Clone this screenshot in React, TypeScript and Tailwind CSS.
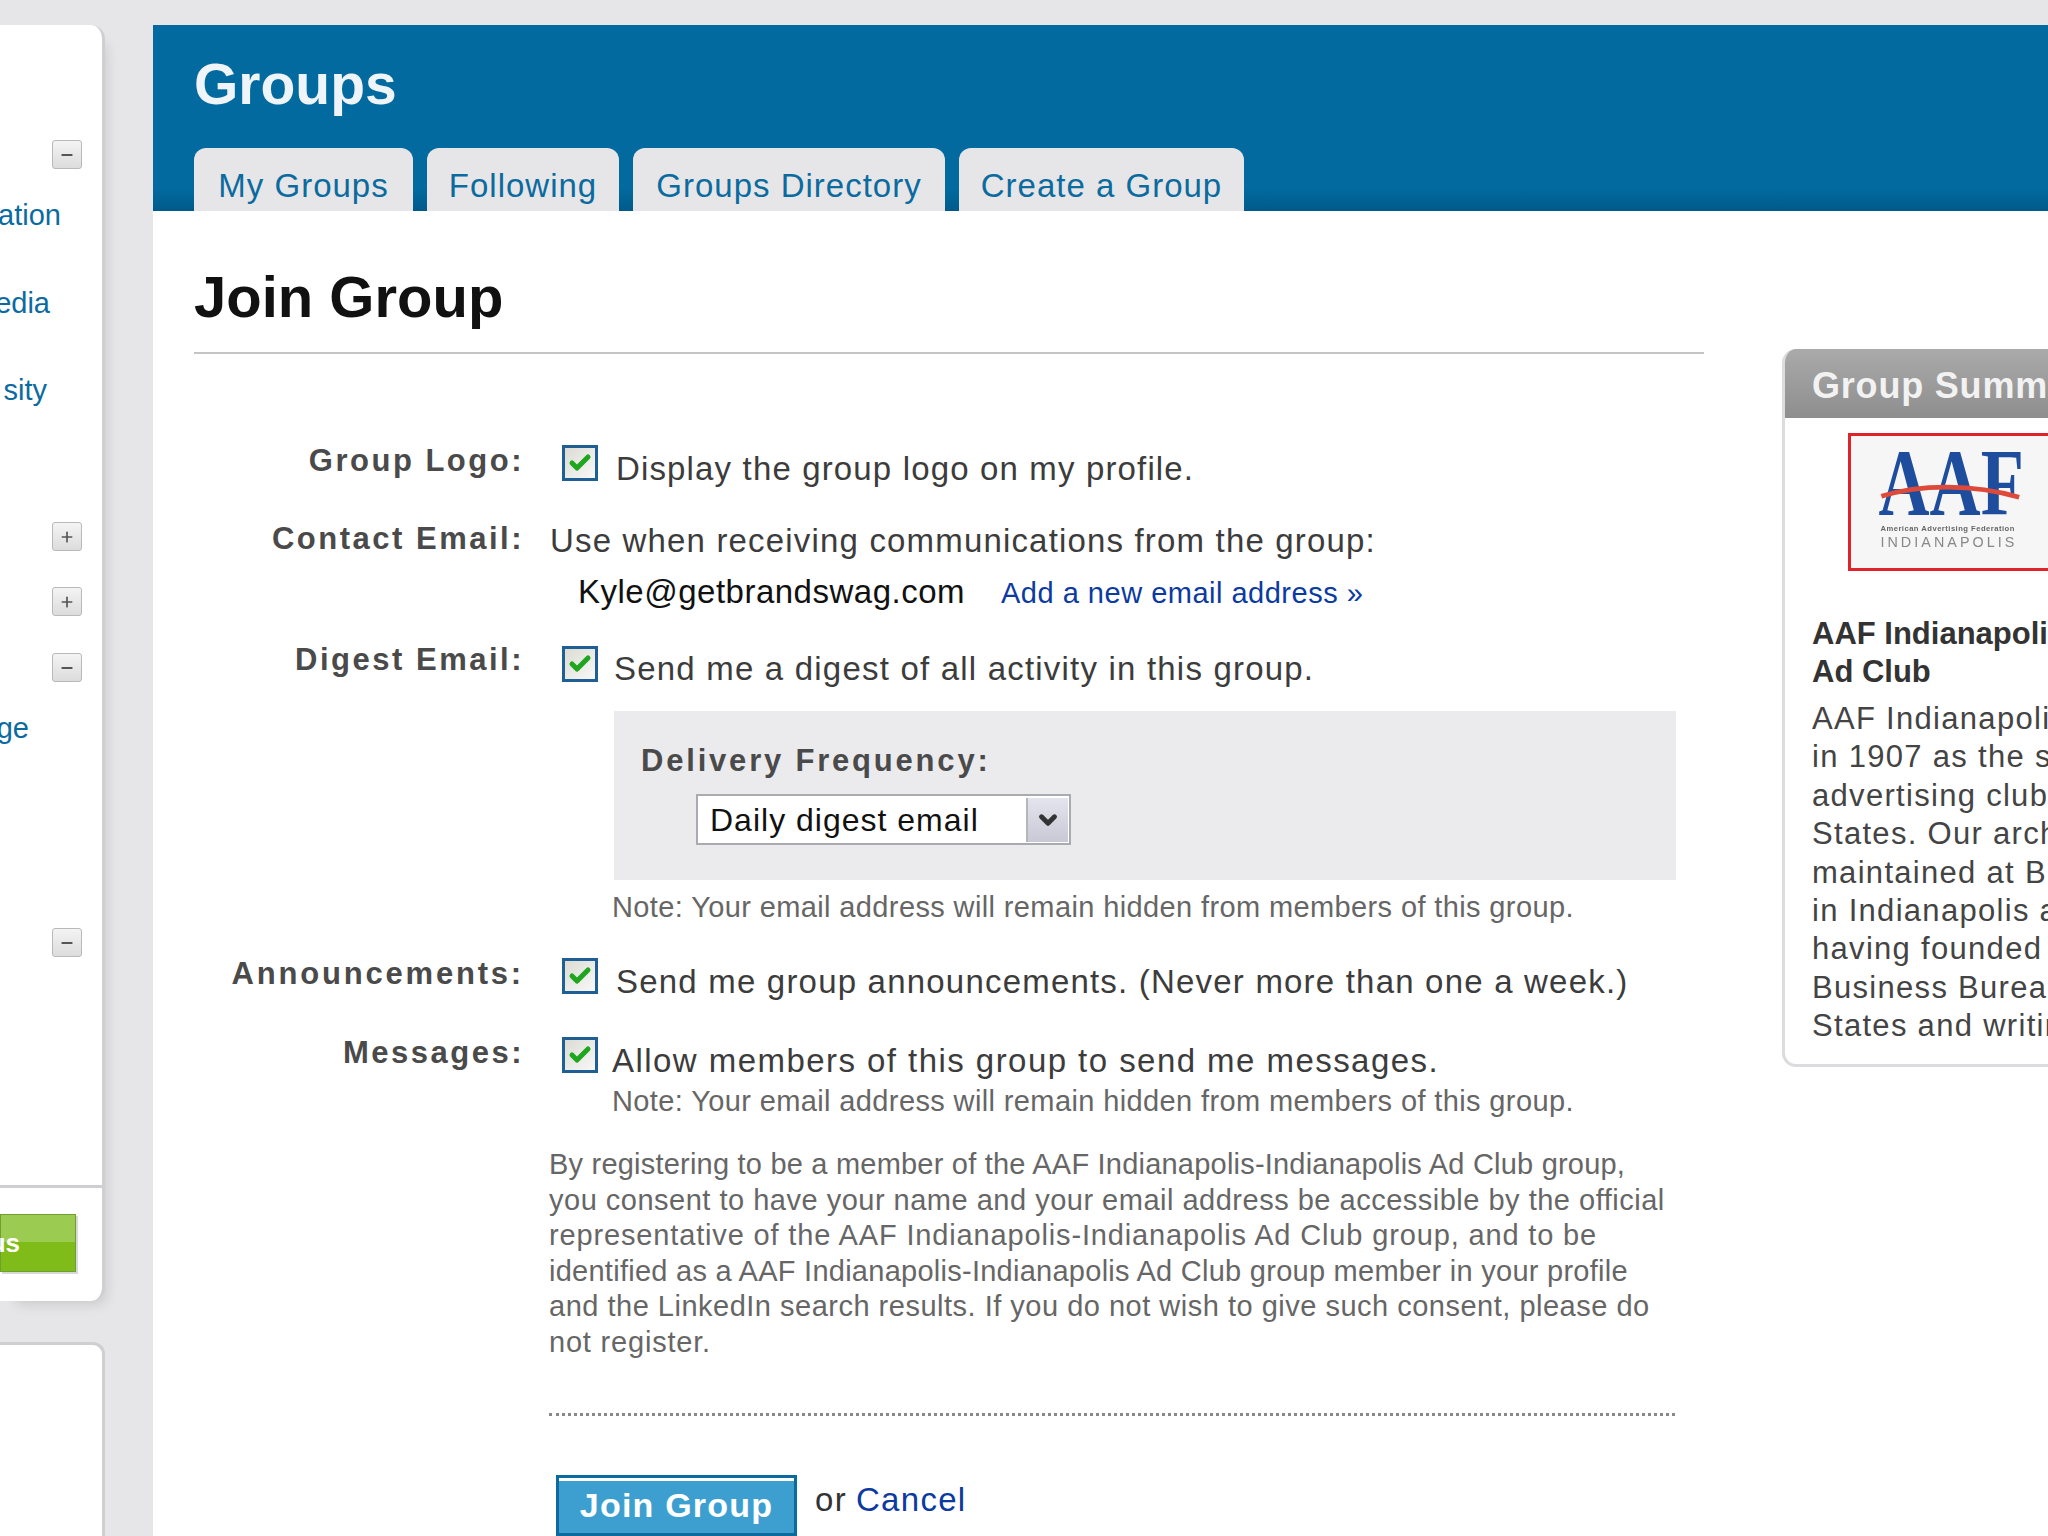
import { Check, ChevronDown, Minus, Plus } from "lucide-react";

const tabs = [
  { label: "My Groups", width: "w-[219px]" },
  { label: "Following", width: "w-[192px]" },
  { label: "Groups Directory", width: "w-[312px]" },
  { label: "Create a Group", width: "w-[285px]" },
];

const summaryLines = [
  "AAF Indianapolis was founded",
  "in 1907 as the second oldest",
  "advertising club in the United",
  "States. Our archives are",
  "maintained at Butler University",
  "in Indianapolis and we are proud",
  "having founded the Better",
  "Business Bureau in the United",
  "States and writing the first",
];

const consentLines = [
  { text: "By registering to be a member of the AAF Indianapolis-Indianapolis Ad Club group,", tracking: "tracking-[0.21px]" },
  { text: "you consent to have your name and your email address be accessible by the official", tracking: "tracking-[0.5px]" },
  { text: "representative of the AAF Indianapolis-Indianapolis Ad Club group, and to be", tracking: "tracking-[0.85px]" },
  { text: "identified as a AAF Indianapolis-Indianapolis Ad Club group member in your profile", tracking: "tracking-[0.26px]" },
  { text: "and the LinkedIn search results. If you do not wish to give such consent, please do", tracking: "tracking-[0.5px]" },
  { text: "not register.", tracking: "tracking-[0.8px]" },
];

function Toggle({ open, className }: { open: boolean; className: string }) {
  return (
    <div className={`flex h-[29px] w-[30px] shrink-0 items-center justify-center self-end rounded-[3px] border border-[#b9b9bd] bg-gradient-to-b from-[#f4f4f4] to-[#dcdcdc] text-[#555] ${className}`}>
      {open ? <Minus size={16} strokeWidth={3} /> : <Plus size={16} strokeWidth={2.5} />}
    </div>
  );
}

function SideLink({ text, className }: { text: string; className: string }) {
  return <div className={`h-[34px] shrink-0 self-end text-[29px] leading-[34px] text-[#0b6b9f] ${className}`}>{text}</div>;
}

function Sidebar() {
  return (
    <aside className="flex w-[105px] shrink-0 flex-col gap-[41px]">
      <div className="flex h-[1276px] shrink-0 flex-col overflow-hidden rounded-tr-[14px] rounded-br-[14px] border-r-[3px] border-[#cfcfd3] bg-white shadow-[8px_10px_14px_-8px_rgba(0,0,0,0.15)]">
        <Toggle open className="mt-[115px] mr-[20px]" />
        <SideLink text="ation" className="mt-[29px] mr-[41px]" />
        <SideLink text="edia" className="mt-[54px] mr-[52px]" />
        <SideLink text="sity" className="mt-[53px] mr-[55px]" />
        <Toggle open={false} className="mt-[115px] mr-[20px]" />
        <Toggle open={false} className="mt-[36px] mr-[20px]" />
        <Toggle open className="mt-[37px] mr-[20px]" />
        <SideLink text="ge" className="mt-[29px] mr-[73px]" />
        <Toggle open className="mt-[183px] mr-[20px]" />
        <div className="mt-[228px] h-[3px] w-full shrink-0 bg-[#cfcfd3]" />
        <div className="mt-[26px] mr-[26px] flex h-[58px] shrink-0 items-center justify-end self-stretch border border-[#6f9f2d] bg-[linear-gradient(#9ccb52_0%,#9ccb52_48%,#7fbb19_48%,#7fbb19_100%)] pr-[55px] shadow-[2px_2px_0_#d8d8d8]">
          <span className="text-[26px] font-bold text-white">us</span>
        </div>
      </div>
      <div className="h-[300px] shrink-0 rounded-tr-[12px] border-t-[3px] border-r-[3px] border-[#cfcfd3] bg-white" />
    </aside>
  );
}

function Header() {
  return (
    <header className="flex h-[186px] flex-col justify-between bg-[linear-gradient(#026a9f_0%,#026a9f_88%,#005a8a_100%)] pl-[41px]">
      <h1 className="pt-[27px] text-[57px] leading-[64px] font-bold text-[#eef4f8]">Groups</h1>
      <nav className="flex gap-[14px]">
        {tabs.map((tab) => (
          <div
            key={tab.label}
            className={`flex h-[63px] items-center justify-center rounded-t-[12px] bg-[#e6e6e8] pt-[12px] text-[33px] tracking-[1px] text-[#0b6b9f] ${tab.width}`}
          >
            {tab.label}
          </div>
        ))}
      </nav>
    </header>
  );
}

function CheckBox() {
  return (
    <div className="flex h-[36px] w-[36px] shrink-0 items-center justify-center border-[3px] border-[#1f5f93] bg-gradient-to-br from-[#dcdcd4] to-[#f8f8f8]">
      <Check size={24} strokeWidth={5} className="text-[#1fa51f]" />
    </div>
  );
}

function Label({ text, className = "" }: { text: string; className?: string }) {
  return (
    <div className={`w-[330px] shrink-0 text-right text-[31px] leading-[36px] font-bold tracking-[2.5px] text-[#4a4a4a] ${className}`}>
      {text}
    </div>
  );
}

function Note({ className }: { className: string }) {
  return (
    <p className={`ml-[418px] text-[29px] leading-[34px] tracking-[0.38px] text-[#666] ${className}`}>
      Note: Your email address will remain hidden from members of this group.
    </p>
  );
}

function JoinForm() {
  return (
    <div className="flex flex-col">
      <div className="mt-[99px] flex">
        <Label text="Group Logo:" className="mt-[-10px]" />
        <div className="mt-[-8px] ml-[38px]"><CheckBox /></div>
        <p className="mt-[-3px] ml-[18px] text-[33px] leading-[38px] tracking-[1.15px] text-[#3c3c3c]">Display the group logo on my profile.</p>
      </div>

      <div className="mt-[41px] flex">
        <Label text="Contact Email:" className="mt-[-8px]" />
        <div className="mt-[-7px] ml-[26px]">
          <p className="text-[33px] leading-[38px] tracking-[1.17px] text-[#3c3c3c]">Use when receiving communications from the group:</p>
          <div className="mt-[13px] flex items-baseline pl-[28px]">
            <span className="text-[33px] leading-[38px] tracking-[0.5px] text-[#111]">Kyle@getbrandswag.com</span>
            <span className="ml-[36px] text-[29px] leading-[38px] tracking-[0.5px] text-[#0b3aa0]">Add a new email address »</span>
          </div>
        </div>
      </div>

      <div className="mt-[31px] flex">
        <Label text="Digest Email:" className="mt-[-1px]" />
        <div className="mt-[3px] ml-[38px]"><CheckBox /></div>
        <p className="mt-[7px] ml-[16px] text-[33px] leading-[38px] tracking-[1.2px] text-[#3c3c3c]">Send me a digest of all activity in this group.</p>
      </div>

      <div className="mt-[23px] ml-[420px] h-[169px] w-[1062px] bg-[#ebebee] pt-[32px] pl-[27px]">
        <div className="text-[31px] leading-[36px] font-bold tracking-[2.8px] text-[#4a4a4a]">Delivery Frequency:</div>
        <div className="mt-[15px] ml-[55px] flex h-[51px] w-[375px] items-center justify-between border-2 border-[#a9abb0] bg-white pr-[1px] pl-[12px]">
          <span className="text-[32px] tracking-[1px] text-[#111]">Daily digest email</span>
          <div className="flex h-[44px] w-[42px] items-center justify-center border-l-2 border-[#b5b5bd] bg-gradient-to-b from-[#e4e4ee] to-[#c9c9d6]">
            <ChevronDown size={26} strokeWidth={4.5} className="text-[#333]" />
          </div>
        </div>
      </div>

      <Note className="mt-[10px]" />

      <div className="mt-[41px] flex">
        <Label text="Announcements:" className="mt-[-9px] tracking-[2.8px]" />
        <div className="mt-[-7px] ml-[38px]"><CheckBox /></div>
        <p className="mt-[-2px] ml-[18px] text-[33px] leading-[38px] tracking-[1.2px] text-[#3c3c3c]">Send me group announcements. (Never more than one a week.)</p>
      </div>

      <div className="mt-[44px] flex">
        <Label text="Messages:" className="mt-[-10px]" />
        <div className="mt-[-8px] ml-[38px]"><CheckBox /></div>
        <p className="mt-[-3px] ml-[14px] text-[33px] leading-[38px] tracking-[1.45px] text-[#3c3c3c]">Allow members of this group to send me messages.</p>
      </div>

      <Note className="mt-[4px]" />

      <div className="mt-[29px] ml-[355px] flex flex-col text-[29px] leading-[35.6px] whitespace-nowrap text-[#666]">
        {consentLines.map((line) => (
          <p key={line.text} className={line.tracking}>{line.text}</p>
        ))}
      </div>

      <div className="mt-[52px] ml-[355px] w-[1126px] border-t-[3px] border-dotted border-[#888]" />

      <div className="mt-[59px] ml-[362px] flex items-center">
        <button className="h-[61px] w-[241px] border-[3px] border-[#0b6b9f] bg-[#3d9fd0] text-[34px] font-bold tracking-[1.2px] text-white shadow-[inset_0_3px_0_#ffffff]">
          Join Group
        </button>
        <span className="mt-[-11px] ml-[18px] text-[33px] tracking-[1.3px] text-[#333]">or</span>
        <span className="mt-[-11px] ml-[9px] text-[33px] tracking-[1.3px] text-[#0b3aa0]">Cancel</span>
      </div>
    </div>
  );
}

function AafLogo() {
  return (
    <svg viewBox="0 0 260 138" className="h-[138px] w-[260px] border-[3px] border-[#e0222a] bg-[#f6f6f6]">
      <g className="blur-[0.7px]">
        <text x="26" y="83" fontFamily="Liberation Serif" fontWeight="700" fontSize="100" textLength="152" lengthAdjust="spacingAndGlyphs" fill="#1f4d9e">AAF</text>
        <path d="M29 63 C 70 50, 125 50, 173 64" fill="none" stroke="#dd4a3a" strokeWidth="5" />
        <text x="28" y="99" fontFamily="Liberation Sans" fontSize="8" fontWeight="700" textLength="140" fill="#666">American Advertising Federation</text>
        <text x="28" y="116" fontFamily="Liberation Sans" fontSize="15" textLength="140" fill="#888">INDIANAPOLIS</text>
      </g>
    </svg>
  );
}

function GroupSummary() {
  return (
    <section className="mt-[138px] ml-[78px] h-[718px] w-[420px] shrink-0 overflow-hidden rounded-t-[14px] rounded-b-[14px] border-b-[3px] border-l-[3px] border-[#dcdcdf]">
      <h2 className="h-[69px] bg-gradient-to-b from-[#aaaaaa] to-[#8e8e8e] pt-[2px] pl-[27px] text-[36px] leading-[69px] font-bold tracking-[0.8px] text-[#f2f2f2]">Group Summary</h2>
      <div className="mt-[15px] ml-[63px]"><AafLogo /></div>
      <div className="mt-[44px] pl-[27px] text-[31px] leading-[38px] font-bold text-[#333]">
        <p className="whitespace-nowrap">AAF Indianapolis-Indianapolis</p>
        <p>Ad Club</p>
      </div>
      <div className="mt-[9px] pl-[27px] text-[31px] leading-[38.4px] tracking-[1.3px] whitespace-nowrap text-[#444]">
        {summaryLines.map((line) => (
          <p key={line}>{line}</p>
        ))}
      </div>
    </section>
  );
}

export default function App() {
  return (
    <div className="flex h-[1536px] w-[2048px] gap-[48px] overflow-hidden bg-[#e6e6e8] pt-[25px] font-['Liberation_Sans',Arial,sans-serif]">
      <Sidebar />
      <main className="min-w-0 flex-1">
        <Header />
        <div className="flex h-[1400px] bg-white pl-[41px]">
          <div className="w-[1510px] shrink-0">
            <h2 className="mt-[48px] text-[58px] leading-[76px] font-bold text-[#111]">Join Group</h2>
            <div className="mt-[17px] h-[2px] bg-[#c4c4c4]" />
            <JoinForm />
          </div>
          <GroupSummary />
        </div>
      </main>
    </div>
  );
}
